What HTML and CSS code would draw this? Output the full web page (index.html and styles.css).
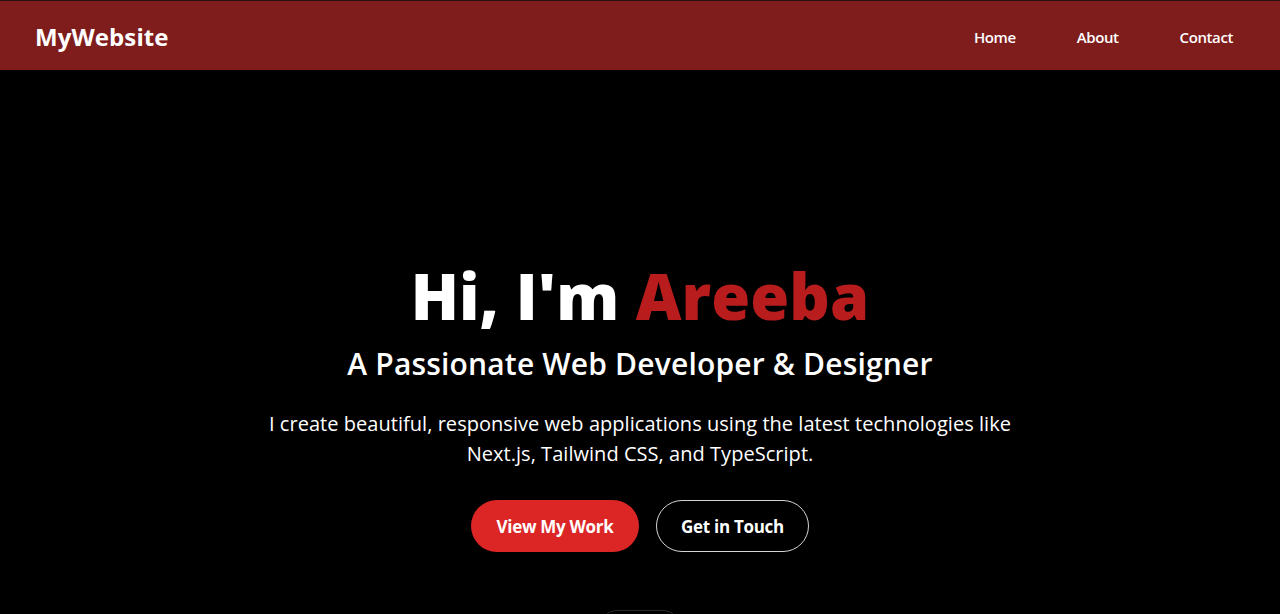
FILE: index.html
```html
<!DOCTYPE html>
<html lang="en">
<head>
<meta charset="utf-8">
<title>MyWebsite</title>
<link rel="stylesheet" href="styles.css">
</head>
<body>
<header class="navbar">
  <a class="brand" href="#">MyWebsite</a>
  <nav class="nav-links">
    <a href="#">Home</a>
    <a href="#">About</a>
    <a href="#">Contact</a>
  </nav>
</header>
<main class="hero">
  <h1 class="hero-title">Hi, I'm <span class="accent">Areeba</span></h1>
  <h2 class="hero-subtitle">A Passionate Web Developer &amp; Designer</h2>
  <p class="hero-text">I create beautiful, responsive web applications using the latest technologies like Next.js, Tailwind CSS, and TypeScript.</p>
  <div class="hero-actions">
    <a class="btn btn-primary" href="#">View My Work</a>
    <a class="btn btn-outline" href="#">Get in Touch</a>
  </div>
  <div class="scroll-indicator"></div>
</main>
</body>
</html>
```

FILE: styles.css
```css
* { box-sizing: border-box; }
html, body {
  margin: 0;
  padding: 0;
  background: #000;
  color: #fff;
  font-family: "Open Sans", "Noto Sans", sans-serif;
  overflow: hidden;
}
a { color: inherit; text-decoration: none; }

.navbar {
  height: 70px;
  background: #7f1d1d;
  border-top: 1px solid #2a1010;
  display: flex;
  align-items: center;
  justify-content: space-between;
  padding: 2px 47px 0 35px;
}
.brand {
  font-size: 24px;
  font-weight: 700;
  letter-spacing: 0.1px;
}
.nav-links {
  display: flex;
  gap: 61px;
}
.nav-links a {
  font-size: 15px;
  font-weight: 600;
  letter-spacing: -0.4px;
}

.hero {
  height: 544px;
  overflow: hidden;
  display: flex;
  flex-direction: column;
  align-items: center;
  text-align: center;
  padding-top: 194px;
}
.hero-title {
  margin: 0;
  font-size: 63px;
  line-height: 63px;
  font-weight: 800;
  letter-spacing: 0.1px;
}
.accent { color: #b91c1c; }
.hero-subtitle {
  margin: 19px 0 0;
  font-size: 30px;
  line-height: 36px;
  font-weight: 600;
  letter-spacing: 0.17px;
}
.hero-text {
  margin: 27px 0 0;
  max-width: 768px;
  font-size: 20px;
  line-height: 30px;
  letter-spacing: 0.04px;
}
.hero-actions {
  display: flex;
  gap: 17px;
  margin-top: 31px;
}
.btn {
  height: 52px;
  flex: none;
  display: flex;
  align-items: center;
  justify-content: center;
  border-radius: 26px;
  font-size: 17px;
  font-weight: 700;
  letter-spacing: -0.3px;
}
.btn-primary {
  width: 168px;
  background: #dc2626;
}
.btn-outline {
  width: 153px;
  border: 1px solid #d4d4d4;
}
.scroll-indicator {
  flex: none;
  margin-top: 58px;
  width: 76px;
  height: 40px;
  border: 1px solid #2a2a2a;
  border-radius: 14px;
}
```
